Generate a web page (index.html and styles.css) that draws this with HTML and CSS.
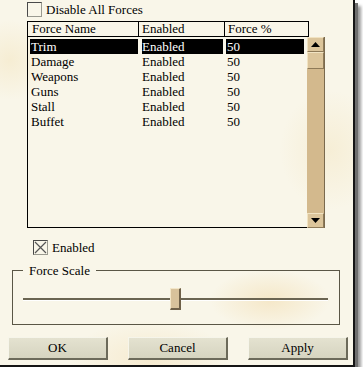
FILE: index.html
```html
<!DOCTYPE html>
<html>
<head>
<meta charset="utf-8">
<link rel="stylesheet" href="styles.css">
</head>
<body>
<div class="dialog">
  <div class="check-row top-check">
    <span class="cbox"></span>
    <span class="label">Disable All Forces</span>
  </div>

  <div class="list">
    <div class="header">
      <div class="hcell c1">Force Name</div>
      <div class="hcell c2">Enabled</div>
      <div class="hcell c3">Force %</div>
    </div>
    <div class="body">
      <div class="rows">
        <div class="row selected"><span class="cell c1">Trim</span><span class="cell c2">Enabled</span><span class="cell c3">50</span></div>
        <div class="row"><span class="cell c1">Damage</span><span class="cell c2">Enabled</span><span class="cell c3">50</span></div>
        <div class="row"><span class="cell c1">Weapons</span><span class="cell c2">Enabled</span><span class="cell c3">50</span></div>
        <div class="row"><span class="cell c1">Guns</span><span class="cell c2">Enabled</span><span class="cell c3">50</span></div>
        <div class="row"><span class="cell c1">Stall</span><span class="cell c2">Enabled</span><span class="cell c3">50</span></div>
        <div class="row"><span class="cell c1">Buffet</span><span class="cell c2">Enabled</span><span class="cell c3">50</span></div>
      </div>
      <div class="scrollbar">
        <div class="sbtn"><svg width="9" height="5" viewBox="0 0 9 5"><polygon points="0,5 9,5 4.5,0" fill="#000"/></svg></div>
        <div class="sthumb"></div>
        <div class="strack"></div>
        <div class="sbtn"><svg width="9" height="5" viewBox="0 0 9 5"><polygon points="0,0 9,0 4.5,5" fill="#000"/></svg></div>
      </div>
    </div>
  </div>

  <div class="check-row en-check">
    <span class="cbox checked"><svg width="13" height="13" viewBox="0 0 13 13"><path d="M1 1 L12 12 M12 1 L1 12" stroke="#555" stroke-width="1.2"/></svg></span>
    <span class="label">Enabled</span>
  </div>

  <fieldset class="group">
    <legend>Force Scale</legend>
    <div class="slider">
      <div class="track"></div>
      <div class="thumb"></div>
    </div>
  </fieldset>

  <div class="buttons">
    <div class="btn">OK</div>
    <div class="btn">Cancel</div>
    <div class="btn">Apply</div>
  </div>
</div>
</body>
</html>
```

FILE: styles.css
```css
html, body {
  margin: 0;
  padding: 0;
  background: #ffffff;
}
body {
  font-family: "Liberation Serif", "Times New Roman", serif;
  font-size: 13px;
  color: #000;
  line-height: 15px;
}
.dialog {
  box-sizing: border-box;
  width: 355px;
  height: 367px;
  border-right: 2px solid #151515;
  border-bottom: 2px solid #151515;
  background:
    radial-gradient(ellipse 60px 30px at 270px 300px, rgba(240, 214, 160, 0.45), transparent),
    radial-gradient(ellipse 80px 40px at 150px 360px, rgba(240, 214, 160, 0.35), transparent),
    radial-gradient(ellipse 50px 60px at 330px 150px, rgba(240, 220, 170, 0.3), transparent),
    radial-gradient(ellipse 40px 40px at 10px 60px, rgba(240, 220, 170, 0.35), transparent),
    #f9f6e9;
  box-shadow: 3px 3px 0 0 #6e6e6e, 6px 6px 3px 0 rgba(0, 0, 0, 0.4);
  display: flex;
  flex-direction: column;
}
.check-row {
  display: flex;
  align-items: center;
  height: 15px;
}
.top-check {
  margin-top: 2px;
  margin-left: 27px;
}
.cbox {
  box-sizing: border-box;
  width: 15px;
  height: 15px;
  border-top: 1px solid #4a4a4a;
  border-left: 1px solid #4a4a4a;
  border-right: 1px solid #9a9a90;
  border-bottom: 1px solid #9a9a90;
  display: flex;
  align-items: center;
  justify-content: center;
}
.cbox svg { display: block; }
.label {
  margin-left: 4px;
}
.list {
  margin-top: 4px;
  margin-left: 27px;
  width: 298px;
}
.header {
  display: flex;
  width: 282px;
  box-sizing: border-box;
  border: 1px solid #000;
  height: 16px;
}
.hcell {
  box-sizing: border-box;
  height: 14px;
  line-height: 14px;
  padding-left: 4px;
}
.header .c1 { width: 111px; border-right: 1px solid #000; }
.header .c2 { width: 86px; border-right: 1px solid #000; padding-left: 3px; }
.header .c3 { flex: 1; padding-left: 3px; }
.body {
  display: flex;
  height: 191px;
}
.rows {
  box-sizing: border-box;
  width: 280px;
  border-left: 1px solid #000;
  border-bottom: 1px solid #000;
  padding-top: 2px;
}
.row {
  display: flex;
  height: 15px;
  line-height: 15px;
}
.cell {
  padding-left: 1px;
  box-sizing: border-box;
}
.row .c1 { margin-left: 2px; width: 108px; }
.row .c2 { margin-left: 4px; width: 81px; padding-left: 0; }
.row .c3 { margin-left: 3px; width: 78px; }
.row.selected .cell {
  background: #000;
  color: #fff;
}
.scrollbar {
  box-sizing: border-box;
  width: 18px;
  background: #d3b98d;
  border-right: 1px solid #7a6a4e;
  display: flex;
  flex-direction: column;
}
.sbtn {
  box-sizing: border-box;
  height: 15px;
  background: #dcc59b;
  border-top: 1px solid #f1e3c2;
  border-left: 1px solid #f1e3c2;
  border-bottom: 1px solid #8e7a58;
  border-right: 1px solid #8e7a58;
  display: flex;
  align-items: center;
  justify-content: center;
}
.sthumb {
  box-sizing: border-box;
  height: 17px;
  background: #dcc59b;
  border-top: 1px solid #f1e3c2;
  border-left: 1px solid #f1e3c2;
  border-bottom: 1px solid #8e7a58;
  border-right: 1px solid #8e7a58;
}
.strack { flex: 1; }
.en-check {
  margin-top: 12px;
  margin-left: 33px;
}
.group {
  margin: 8px 0 0 12px;
  width: 328px;
  box-sizing: border-box;
  border: 1px solid #5a5646;
  padding: 0 0 14px 0;
  min-width: 0;
}
.group legend {
  margin-left: 10px;
  padding: 0 6px 0 6px;
  line-height: 15px;
  height: 15px;
}
.slider {
  position: relative;
  margin-top: 10px;
  margin-left: 10px;
  width: 305px;
  height: 22px;
  display: flex;
  align-items: center;
}
.track {
  width: 100%;
  height: 2px;
  background: #6b6552;
  border-bottom: 1px solid #ffffff;
}
.thumb {
  position: absolute;
  left: 147px;
  top: 0;
  box-sizing: border-box;
  width: 11px;
  height: 22px;
  background: #d8c29b;
  border-top: 1px solid #f3e6c8;
  border-left: 1px solid #f3e6c8;
  border-right: 2px solid #6e6048;
  border-bottom: 2px solid #6e6048;
}
.buttons {
  display: flex;
  gap: 20px;
  margin-top: 12px;
  margin-left: 8px;
}
.btn {
  box-sizing: border-box;
  width: 100px;
  height: 23px;
  line-height: 19px;
  text-align: center;
  background: linear-gradient(#e4e2d0, #d6d4c0);
  border-top: 1px solid #f6f5ea;
  border-left: 1px solid #f6f5ea;
  border-right: 2px solid #6c6a5a;
  border-bottom: 2px solid #6c6a5a;
}
```
